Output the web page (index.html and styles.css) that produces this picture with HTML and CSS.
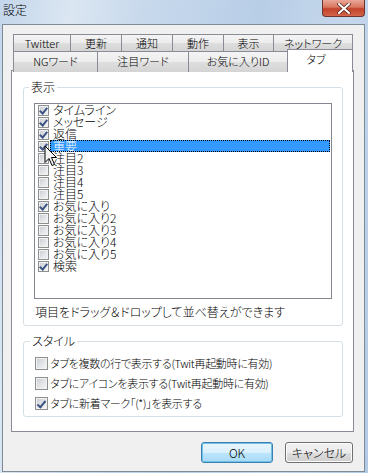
FILE: index.html
```html
<!DOCTYPE html>
<html lang="ja">
<head>
    <meta charset="UTF-8">
    <title>設定</title>
    <link rel="stylesheet" href="styles.css">
</head>
<body>
    <div class="window">
        <div class="titlebar">
            <span class="title">設定</span>
            <div class="close">
                <svg width="14" height="11" viewBox="0 0 14 11">
                    <path d="M2 1 L12 10 M12 1 L2 10" stroke="#5a2a22" stroke-width="3.6" stroke-linecap="round"/>
                    <path d="M2 1 L12 10 M12 1 L2 10" stroke="#fff" stroke-width="2" stroke-linecap="round"/>
                </svg>
            </div>
        </div>

        <div class="client">
            <div class="tab-row row-1">
                <div class="tab">Twitter</div>
                <div class="tab">更新</div>
                <div class="tab">通知</div>
                <div class="tab">動作</div>
                <div class="tab">表示</div>
                <div class="tab">ネットワーク</div>
            </div>
            <div class="tab-row row-2">
                <div class="tab">NGワード</div>
                <div class="tab">注目ワード</div>
                <div class="tab">お気に入りID</div>
                <div class="tab selected">タブ</div>
            </div>

            <div class="panel">
                <fieldset class="group">
                    <legend>表示</legend>
                    <div class="listbox">
                        <div class="item"><span class="check on"></span><span class="label">タイムライン</span></div>
                        <div class="item"><span class="check on"></span><span class="label">メッセージ</span></div>
                        <div class="item"><span class="check on"></span><span class="label">返信</span></div>
                        <div class="item current"><span class="check on"></span><span class="label">重要</span></div>
                        <div class="item"><span class="check"></span><span class="label">注目2</span></div>
                        <div class="item"><span class="check"></span><span class="label">注目3</span></div>
                        <div class="item"><span class="check"></span><span class="label">注目4</span></div>
                        <div class="item"><span class="check"></span><span class="label">注目5</span></div>
                        <div class="item"><span class="check on"></span><span class="label">お気に入り</span></div>
                        <div class="item"><span class="check"></span><span class="label">お気に入り2</span></div>
                        <div class="item"><span class="check"></span><span class="label">お気に入り3</span></div>
                        <div class="item"><span class="check"></span><span class="label">お気に入り4</span></div>
                        <div class="item"><span class="check"></span><span class="label">お気に入り5</span></div>
                        <div class="item"><span class="check on"></span><span class="label">検索</span></div>

                        <!-- puntero del ratón encima de la lista -->
                        <svg class="cursor" width="13" height="22" viewBox="0 0 13 22">
                            <path d="M1 1 L1 17.5 L5 13.5 L8 20.5 L10.5 19.5 L7.5 12.5 L12.5 12.5 Z" fill="#f4f4f4" stroke="#000" stroke-width="1" stroke-linejoin="round"/>
                        </svg>
                    </div>
                    <p class="hint">項目をドラッグ＆ドロップして並べ替えができます</p>
                </fieldset>

                <fieldset class="group style-group">
                    <legend>スタイル</legend>
                    <div class="option"><span class="check big"></span>タブを複数の行で表示する(Twit再起動時に有効)</div>
                    <div class="option"><span class="check big"></span>タブにアイコンを表示する(Twit再起動時に有効)</div>
                    <div class="option"><span class="check big on"></span>タブに新着マーク「(*)」を表示する</div>
                </fieldset>
            </div>

            <div class="buttons">
                <button class="btn default">OK</button>
                <button class="btn">キャンセル</button>
            </div>
        </div>
    </div>
</body>
</html>
```

FILE: styles.css
```css
body {
    margin: 0;
    background: #bcd2ea;
    font-family: "Noto Sans CJK JP", "DejaVu Sans", sans-serif;
    font-size: 11px;
    font-weight: 300;
    font-feature-settings: "palt";
    color: #000;
}

.window {
    width: 368px;
    height: 473px;
    overflow: hidden;
    position: relative;
    background: linear-gradient(100deg, #c3d6eb 0%, #dbe6f2 16%, #c8d9ec 32%, #b8cee7 58%, #c5d7eb 78%, #b2cae4 100%);
}

/* barra de título estilo Aero */
.titlebar {
    height: 24px;
    display: flex;
    justify-content: space-between;
    align-items: flex-start;
}

.title {
    padding: 3px 0 0 3px;
    font-size: 12px;
    line-height: 14px;
}

.close {
    width: 41px;
    height: 16px;
    margin-right: 3px;
    border: 1px solid #6b3530;
    border-top: none;
    border-radius: 0 0 4px 4px;
    background: linear-gradient(#e9a797 0%, #d8765f 45%, #c2412a 55%, #d4654a 100%);
    display: flex;
    justify-content: center;
    align-items: center;
}

.client {
    margin-left: 2px;
    width: 363px;
    height: 448px;
    box-sizing: border-box;
    border: 1px solid #7d8a98;
    background: #f0f0f0;
    padding: 9px 0 0 8px;
}

/* pestañas */
.tab-row {
    display: grid;
    margin-left: 2px;
}

.row-1 {
    grid-template-columns: 57px 51px 51px 51px 50px 80px;
    height: 17px;
}

.row-2 {
    grid-template-columns: 84px 91px 99px 66px;
    height: 19px;
    position: relative;
    z-index: 2;
}

.tab {
    border: 1px solid #898c95;
    border-right: none;
    border-bottom: none;
    background: linear-gradient(#f4f4f4 0%, #ececec 50%, #dedede 51%, #d4d4d4 100%);
    text-align: center;
    line-height: 16px;
    white-space: nowrap;
}

.row-1 .tab:last-child {
    border-right: 1px solid #898c95;
}

.row-2 .tab {
    line-height: 18px;
}

.tab.selected {
    margin-top: -2px;
    height: 22px;
    border-right: 1px solid #898c95;
    background: #fff;
    line-height: 18px;
    padding-right: 8px;
}

.panel {
    width: 343px;
    height: 362px;
    box-sizing: border-box;
    border: 1px solid #898c95;
    background: #fff;
    position: relative;
    z-index: 1;
}

/* grupos */
.group {
    margin: 9px 10px 0 11px;
    padding: 9px 10px 6px;
    border: 1px solid #d5dfe5;
    border-radius: 3px;
    min-width: 0;
}

.group legend {
    padding: 0 2px;
    margin-left: -5px;
    font-size: 12px;
    line-height: 14px;
}

.listbox {
    height: 196px;
    box-sizing: border-box;
    border: 1px solid #828790;
    position: relative;
}

.item {
    height: 12px;
    display: flex;
    align-items: center;
    font-size: 12px;
    line-height: 12px;
}

.item .check {
    margin: 0 1px 0 3px;
}

.label {
    flex: 1;
    height: 12px;
    padding-left: 3px;
    margin-right: 1px;
    box-sizing: border-box;
}

.item.current .label {
    background: #3399ff;
    color: #fff;
    outline: 1px dotted #000;
    outline-offset: -1px;
}

.cursor {
    position: absolute;
    left: 9px;
    top: 41px;
}

.hint {
    margin: 6px 0 0 1px;
    font-size: 12px;
    line-height: 14px;
}

.style-group {
    margin-top: 8px;
    padding: 5px 10px 3px 11px;
}

.option {
    height: 20px;
    display: flex;
    align-items: center;
    white-space: nowrap;
    letter-spacing: -0.3px;
}

/* casillas de verificación */
.check {
    width: 11px;
    height: 11px;
    box-sizing: border-box;
    border: 1px solid #8e8f8f;
    background: linear-gradient(135deg, #c6cacf 0%, #e3e5e8 55%, #f6f6f6 100%);
    box-shadow: inset 0 0 0 1px #f2f2f2;
    flex-shrink: 0;
    position: relative;
}

.check.big {
    width: 13px;
    height: 13px;
    margin-right: 2px;
}

.check.on::after {
    content: "";
    position: absolute;
    left: 2px;
    top: 0px;
    width: 3px;
    height: 6px;
    border: solid #3d5484;
    border-width: 0 2px 2px 0;
    transform: rotate(40deg);
}

.check.big.on::after {
    left: 3px;
    top: 1px;
    width: 3px;
    height: 7px;
}

/* botones */
.buttons {
    display: flex;
    justify-content: flex-end;
    gap: 12px;
    margin-top: 10px;
    padding-right: 11px;
}

.btn {
    height: 21px;
    width: 68px;
    padding: 0;
    font: inherit;
    font-size: 12px;
    border: 1px solid #707070;
    border-radius: 3px;
    background: linear-gradient(#f2f2f2 0%, #ebebeb 50%, #dddddd 51%, #cfcfcf 100%);
    box-shadow: inset 0 0 0 1px #fcfcfc;
}

.btn.default {
    width: 72px;
    border-color: #3c7fb1;
    background: linear-gradient(#eaf6fd 0%, #d9f0fc 50%, #bee6fd 51%, #a7d9f5 100%);
    box-shadow: inset 0 0 0 1px #6fc1e8;
}
```
